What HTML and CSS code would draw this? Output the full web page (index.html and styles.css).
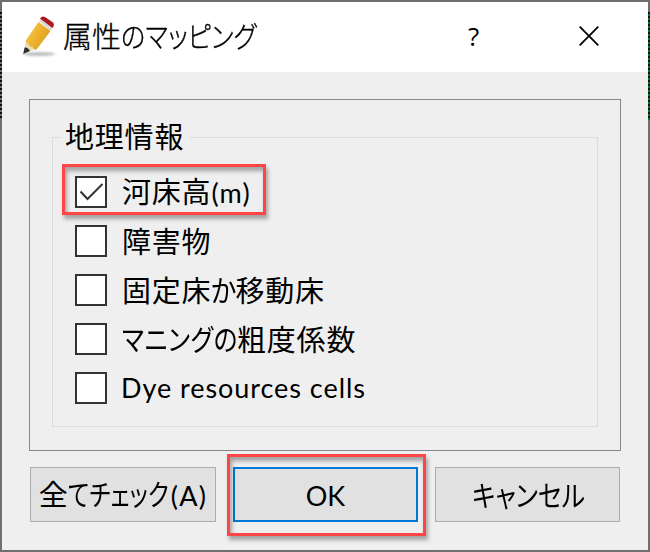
FILE: index.html
```html
<!DOCTYPE html>
<html lang="ja">
<head>
<meta charset="utf-8">
<title>属性のマッピング</title>
<link rel="stylesheet" href="styles.css">
</head>
<body>
<div class="desktop">
  <main class="dialog">
    <header class="titlebar">
      <svg class="pencil" width="36" height="42" viewBox="0 0 36 42">
        <defs>
          <linearGradient id="wood" x1="0" y1="0" x2="1" y2="0.6"><stop offset="0" stop-color="#f7d060"/><stop offset=".5" stop-color="#edb52f"/><stop offset="1" stop-color="#dc9c20"/></linearGradient>
          <filter id="soft" x="-20%" y="-100%" width="140%" height="300%"><feGaussianBlur stdDeviation="1.2"/></filter>
        </defs>
        <ellipse cx="18" cy="38" rx="16" ry="2" fill="#aaa" opacity=".75" filter="url(#soft)"/>
        <path d="M5 25L2.5 37.5L14 33Z" fill="#f0d9b5"/>
        <path d="M3.6 31.5L2.2 38L9 35Q7 31 3.6 31.5Z" fill="#2b3033"/>
        <path d="M17.500 6L29.500 15L15.500 33.500Q13 34.500 11.500 31Q8 31 8 28Q4.500 27.500 5 24Z" fill="url(#wood)"/>
        <path d="M18 5L20 2.500L32 11L29.500 15Z" fill="#ddd6d5"/>
        <path d="M19 2.500Q21 -.5 24 1L32 6.500Q34 9 31.500 12Z" fill="#ad1721"/>
      </svg>
      <h1 class="title">属性<span class="kana title-kana">のマッピング</span></h1>
      <span class="help">?</span>
      <svg class="close" width="20" height="20" viewBox="0 0 20 20"><path d="M.7.7L19.300 19.300M19.300.7L.7 19.300"/></svg>
    </header>
    <section class="panel">
      <div class="group">
        <h2 class="legend">地理情報</h2>
        <label class="row"><span class="box"><svg width="28" height="28" viewBox="0 0 28 28"><path d="M3.500 13.500L10.500 21L25.500 6"/></svg></span><span class="text">河床高<span class="latin">(m)</span></span></label>
        <label class="row"><span class="box"></span><span class="text">障害物</span></label>
        <label class="row"><span class="box"></span><span class="text">固定床<span class="kana ka">か</span>移動床</span></label>
        <label class="row"><span class="box"></span><span class="text"><span class="kana manning">マニングの</span>粗度係数</span></label>
        <label class="row"><span class="box"></span><span class="text latin dye">Dye resources cells</span></label>
      </div>
    </section>
    <footer class="buttons">
      <button class="all">全<span class="kana check">てチェック</span><span class="latin">(A)</span></button>
      <button class="ok latin">OK</button>
      <button class="cancel"><span class="kana cancel-kana">キャンセル</span></button>
    </footer>
  </main>
  <div class="mark mark-row"></div>
  <div class="mark mark-ok"></div>
</div>
</body>
</html>
```
FILE: styles.css
```css
* { box-sizing: border-box; }
body { margin: 0; font-family: "Noto Sans CJK JP", sans-serif; color: #000; }
.desktop { position: relative; width: 650px; height: 552px; padding: 2px; background: #6f6f6f; overflow: hidden; }
.desktop::before, .desktop::after { content: ""; position: absolute; top: 12px; width: 2px; height: 108px; }
.desktop::before { left: 0; background: repeating-linear-gradient(#111 0 2px, #6f6f6f 2px 4px); }
.desktop::after { right: 0; background: repeating-linear-gradient(#101010 0 2px, #087832 2px 4px); }
.dialog { width: 646px; height: 548px; background: #efefef; }
.titlebar { display: flex; align-items: center; height: 70px; padding-left: 19px; background: #fff; }
.pencil { flex: none; }
.title { margin: -4px 0 0 6px; width: 405px; font-size: 29px; font-weight: 300; -webkit-text-stroke: .35px #000; line-height: 40px; white-space: nowrap; }
.kana { display: inline-block; white-space: nowrap; transform-origin: left center; font-feature-settings: "palt"; }
.title-kana { transform: scaleX(.87); }
.help { width: 16px; margin-top: -3px; font: 26px/32px "Open Sans", sans-serif; }
.close { margin: -2px 0 0 95px; fill: none; stroke: #000; stroke-width: 1.8; }
.panel { width: 592px; height: 352px; margin: 27px 0 0 27px; padding: 37px 22px 0; border: 1px solid #828790; }
.group { width: 546px; height: 290px; padding: 0 0 0 22px; border: 1px solid #dcdcdc; }
.legend { width: 129px; height: 34px; margin: -19px 0 14px -14px; padding-left: 4px; background: #efefef; font-size: 29px; font-weight: 400; line-height: 33px; letter-spacing: .8px; }
.row { display: flex; align-items: center; height: 49px; }
.box { flex: none; width: 32px; height: 32px; border: 2px solid #333; background: #fff; }
.box svg { display: block; fill: none; stroke: #333; stroke-width: 2; }
.text { margin: -1px 0 0 15px; font-size: 29px; line-height: 40px; letter-spacing: .8px; white-space: nowrap; }
.latin { font-family: Lato, sans-serif; font-size: 27px; }
.dye { margin-left: 14px; padding-top: 2px; letter-spacing: .95px; }
.ka { width: 24px; transform: scaleX(.9); }
.manning { width: 115px; transform: scaleX(.85); }
.buttons { display: flex; gap: 17px; margin: 16px 0 0 28px; }
button { width: 185px; height: 55px; padding: 0; border: 1px solid #adadad; background: #e1e1e1; color: #000; font: 29px/40px "Noto Sans CJK JP", sans-serif; white-space: nowrap; }
.all { width: 186px; }
.ok { border: 2px solid #0078d7; }
button.latin { font: 27px/40px Lato, sans-serif; padding-top: 2px; }
.check { width: 103px; transform: scaleX(.8); text-align: left; }
.all .latin { letter-spacing: 1.3px; }
.cancel { padding-bottom: 2px; }
.cancel-kana { width: 111px; transform: scaleX(.86); text-align: left; }
.mark { position: absolute; border: 3px solid #ff4545; box-shadow: 2px 4px 4px rgba(0,0,0,.32), inset 2px 4px 4px rgba(0,0,0,.32); pointer-events: none; }
.mark-row { left: 62px; top: 164px; width: 204px; height: 51px; }
.mark-ok { left: 227px; top: 454px; width: 199px; height: 82px; }
```
